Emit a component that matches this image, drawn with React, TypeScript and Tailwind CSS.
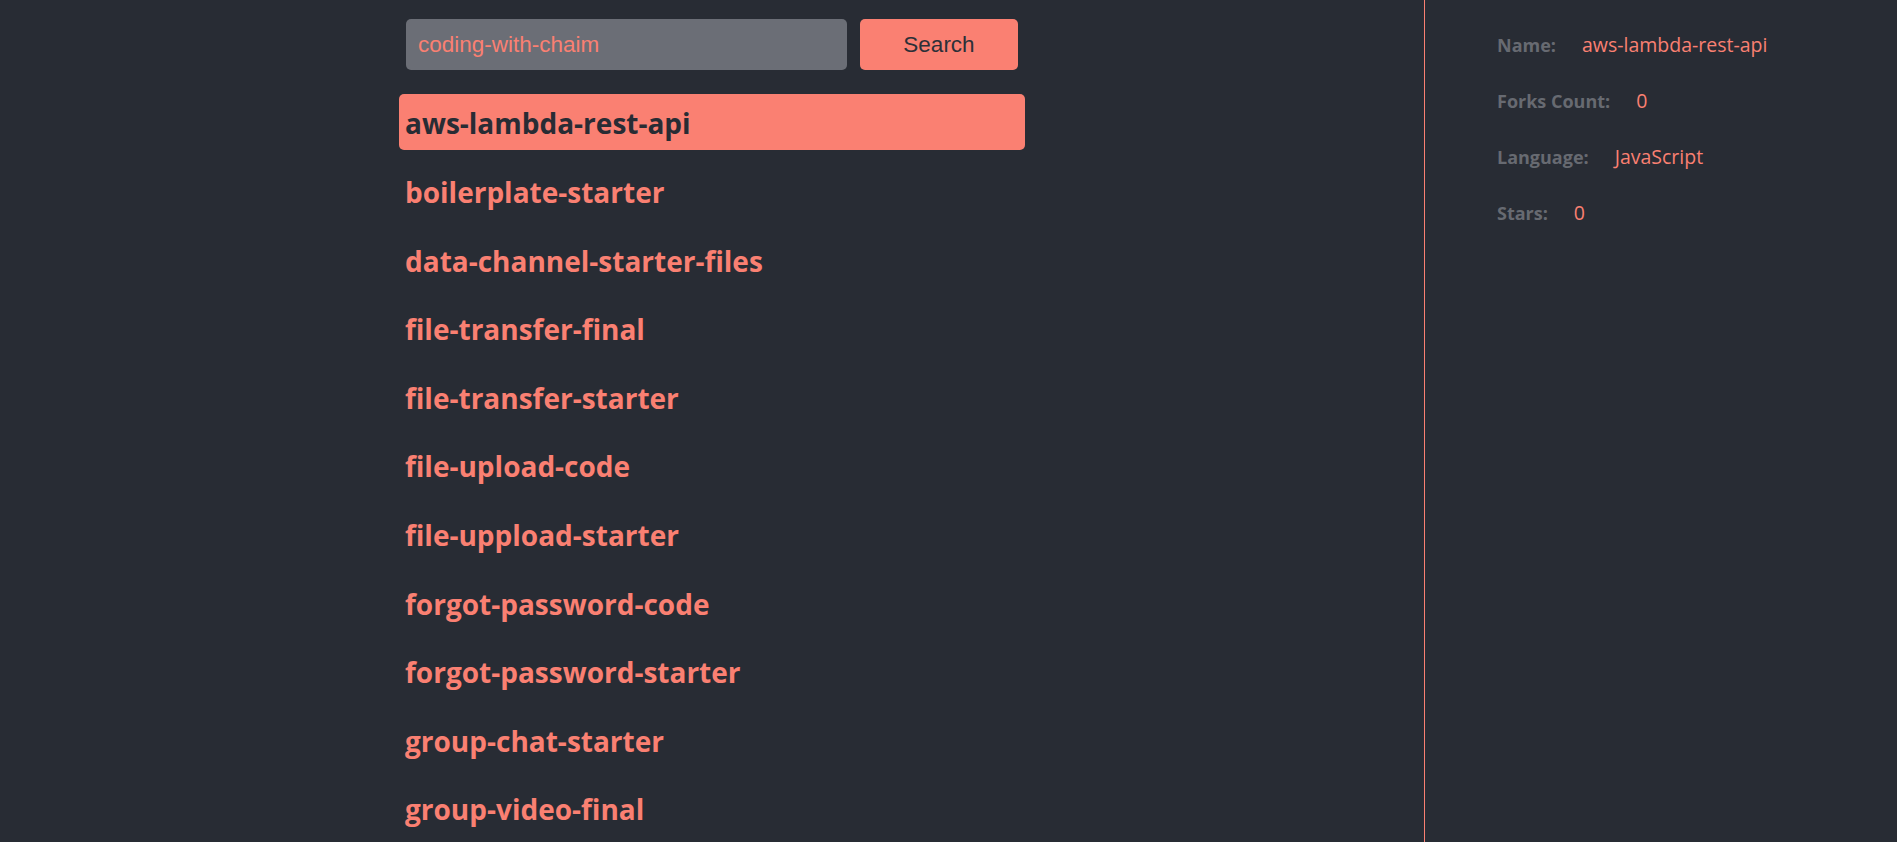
import React from "react";

const repos = [
  "aws-lambda-rest-api",
  "boilerplate-starter",
  "data-channel-starter-files",
  "file-transfer-final",
  "file-transfer-starter",
  "file-upload-code",
  "file-uppload-starter",
  "forgot-password-code",
  "forgot-password-starter",
  "group-chat-starter",
  "group-video-final",
];

const details: [string, string][] = [
  ["Name:", "aws-lambda-rest-api"],
  ["Forks Count:", "0"],
  ["Language:", "JavaScript"],
  ["Stars:", "0"],
];

export default function App() {
  return (
    <div className="grid h-screen grid-cols-[1424px_1fr] overflow-hidden bg-[#282c34]">
      <div className="flex justify-center">
        <div className="flex w-[626px] flex-col">
          <div className="mt-[19px] flex gap-[13px] px-[7px]">
            <input
              readOnly
              value="coding-with-chaim"
              className="h-[51px] w-[441px] rounded-[5px] bg-[#6b6e76] px-[12px] text-[22.5px] text-[#fa8072] outline-none [font-family:'Liberation_Sans',Arial,sans-serif]"
            />
            <button className="h-[51px] w-[158px] rounded-[5px] bg-[#fa8072] text-[22.5px] text-[#2c3038] [font-family:'Liberation_Sans',Arial,sans-serif]">
              Search
            </button>
          </div>
          <div className="mt-[24px] flex flex-col gap-[12.6px]">
            {repos.map((r, i) => (
              <div
                key={r}
                className={
                  i === 0
                    ? "flex h-[56px] shrink-0 items-center rounded-[5px] bg-[#fa8072] px-[6px] pt-[2px] text-[28px] font-bold text-[#282c34] [font-family:'Open_Sans',sans-serif]"
                    : "flex h-[56px] shrink-0 items-center px-[6px] pt-[3px] text-[28px] font-bold text-[#fa8072] [font-family:'Open_Sans',sans-serif]"
                }
              >
                {r}
              </div>
            ))}
          </div>
        </div>
      </div>
      <div className="border-l border-[#fa8072] pl-[72px] pt-[33px] [font-family:'Open_Sans',sans-serif]">
        <div className="flex flex-col gap-[32px]">
          {details.map(([k, v]) => (
            <div key={k} className="flex h-[24px] items-center">
              <span className="text-[18px] font-bold text-[#676a71]">{k}</span>
              <span className="ml-[26px] text-[19.5px] text-[#fa8072]">{v}</span>
            </div>
          ))}
        </div>
      </div>
    </div>
  );
}
